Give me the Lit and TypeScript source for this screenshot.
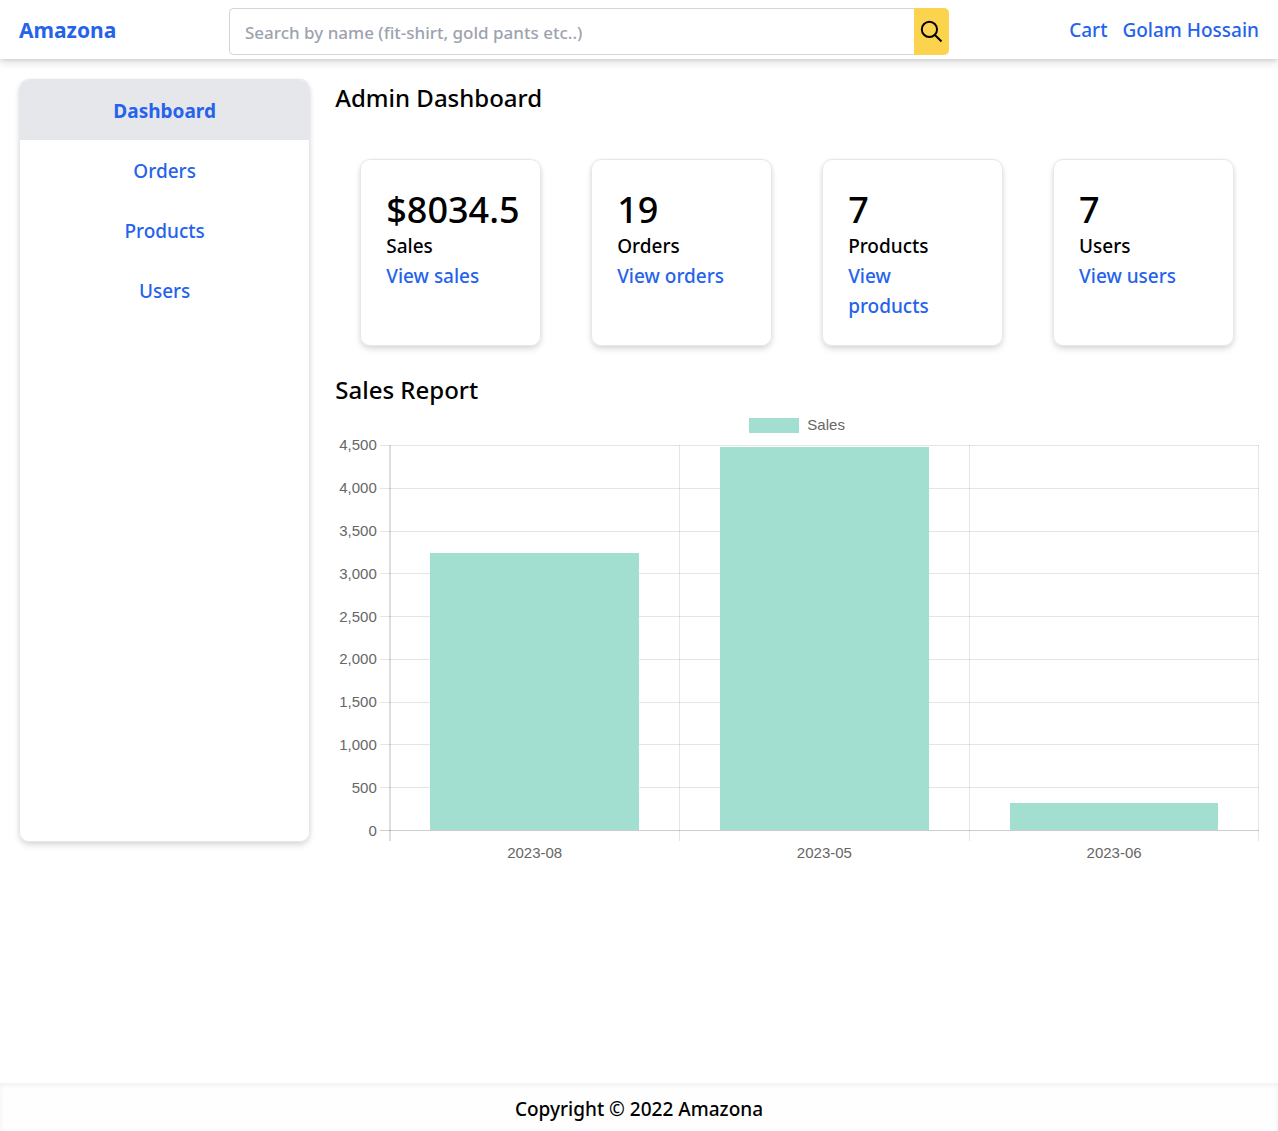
import { LitElement, html, css } from "lit";
import { customElement, property } from "lit/decorators.js";

interface SalesPoint {
  month: string;
  total: number;
}

@customElement("sales-chart")
class SalesChart extends LitElement {
  @property({ attribute: false }) points: SalesPoint[] = [];
  @property({ type: Number }) max = 4500;
  @property({ type: Number }) step = 500;

  static styles = css`
    :host {
      display: block;
      padding: 7px 0 0 4px;
      color: #666;
      font: 15px/18px "Liberation Sans", Arial, sans-serif;
    }
    .legend {
      display: flex;
      justify-content: center;
      align-items: center;
      gap: 8px;
      padding-right: 4px;
      margin-bottom: 11px;
    }
    .swatch {
      width: 50px;
      height: 15px;
      background: #a2dfd0;
    }
    .chart {
      display: grid;
      grid-template-columns: auto 10px minmax(0, 1fr);
      grid-template-rows: auto 10px auto;
    }
    .scale {
      grid-area: 1 / 1;
      display: flex;
      flex-direction: column;
      justify-content: space-between;
      margin-right: 3px;
    }
    .tick {
      display: flex;
      align-items: center;
      justify-content: flex-end;
      height: 0;
    }
    .rows {
      grid-area: 1 / 2 / 2 / 4;
      display: flex;
      flex-direction: column;
    }
    .row {
      flex: 1;
      border-top: 1px solid #e5e5e5;
    }
    .row:last-child {
      border-bottom: 1px solid #ccc;
    }
    .columns {
      grid-area: 1 / 3 / 3 / 4;
      display: flex;
      border-left: 2px solid rgba(0, 0, 0, 0.13);
      margin-left: -1px;
    }
    .column {
      flex: 1;
      border-right: 1px solid rgba(0, 0, 0, 0.1);
    }
    .bars {
      grid-area: 1 / 3;
      display: flex;
      aspect-ratio: 869 / 386;
    }
    .slot {
      flex: 1;
      display: flex;
      align-items: flex-end;
      justify-content: center;
      padding-bottom: 1px;
    }
    .bar {
      width: 72%;
      background: #a2dfd0;
    }
    .months {
      grid-area: 3 / 3;
      display: flex;
      margin-top: 3px;
    }
    .month {
      flex: 1;
      text-align: center;
    }
  `;

  render() {
    const ticks: number[] = [];
    for (let v = this.max; v >= 0; v -= this.step) ticks.push(v);
    return html`
      <div class="legend"><span class="swatch"></span><span>Sales</span></div>
      <div class="chart">
        <div class="scale">
          ${ticks.map((v) => html`<div class="tick">${v.toLocaleString("en-US")}</div>`)}
        </div>
        <div class="rows">${ticks.slice(1).map(() => html`<div class="row"></div>`)}</div>
        <div class="columns">${this.points.map(() => html`<div class="column"></div>`)}</div>
        <div class="bars">
          ${this.points.map(
            (p) => html`<div class="slot">
              <div class="bar" style="height:${(p.total / this.max) * 100}%"></div>
            </div>`
          )}
        </div>
        <div class="months">
          ${this.points.map((p) => html`<div class="month">${p.month}</div>`)}
        </div>
      </div>
    `;
  }
}

@customElement("app-root")
class AppRoot extends LitElement {
  private nav = ["Dashboard", "Orders", "Products", "Users"];

  private stats = [
    { value: "$8034.5", label: "Sales" },
    { value: "19", label: "Orders" },
    { value: "7", label: "Products" },
    { value: "7", label: "Users" },
  ];

  private sales: SalesPoint[] = [
    { month: "2023-08", total: 3237 },
    { month: "2023-05", total: 4475.5 },
    { month: "2023-06", total: 322 },
  ];

  static styles = css`
    :host {
      display: flex;
      flex-direction: column;
      min-height: 100vh;
      background: #fff;
      color: #000;
      font: 500 19px/30px "Noto Sans", "Open Sans", sans-serif;
    }
    * {
      box-sizing: border-box;
    }
    a {
      color: #2563eb;
      text-decoration: none;
    }
    h1,
    h2,
    p,
    ul {
      margin: 0;
      padding: 0;
    }
    h1,
    h2 {
      font-size: 24px;
      line-height: 38px;
      font-weight: 500;
    }
    .header {
      display: flex;
      align-items: flex-start;
      padding: 8px 19px 4px;
      line-height: 45px;
      box-shadow: 0 1px 4px rgba(0, 0, 0, 0.12), 0 5px 8px rgba(0, 0, 0, 0.1);
    }
    .brand {
      width: 210px;
      font-size: 21px;
      font-weight: 700;
    }
    .search {
      flex: 1;
      display: flex;
      height: 47px;
    }
    .field {
      flex: 1;
      min-width: 0;
      padding: 2px 15px 0;
      border: 1px solid #d1d5db;
      border-right: 0;
      border-radius: 5px 0 0 5px;
      background: #fff;
      color: #000;
      font: inherit;
      font-size: 17px;
      outline: none;
    }
    .field::placeholder {
      color: #9ca3af;
      opacity: 1;
    }
    .go {
      display: flex;
      align-items: center;
      justify-content: center;
      width: 35px;
      padding: 0;
      border: 0;
      border-radius: 0 5px 5px 0;
      background: #fcd34d;
      color: #000;
      cursor: pointer;
    }
    .account {
      width: 310px;
      display: flex;
      justify-content: flex-end;
      gap: 15px;
    }
    .content {
      flex: 1;
      display: grid;
      grid-template-columns: repeat(4, minmax(0, 1fr));
      gap: 25px;
      align-content: start;
      padding: 20px 19px;
    }
    .sidebar {
      margin-bottom: 20px;
      border: 1px solid #e5e7eb;
      border-radius: 10px;
      overflow: hidden;
      list-style: none;
      box-shadow: 0 1px 4px rgba(0, 0, 0, 0.07), 0 4px 6px rgba(0, 0, 0, 0.1);
    }
    .entry {
      display: block;
      padding: 16px 15px 14px;
      text-align: center;
    }
    .current {
      background: #e5e7eb;
      font-weight: 700;
    }
    .main {
      grid-column: span 3;
    }
    .stats {
      display: grid;
      grid-template-columns: repeat(4, minmax(0, 1fr));
      gap: 50px;
      padding: 42px 25px 25px;
    }
    .card {
      padding: 29px 28px 24px 25px;
      border: 1px solid #e5e7eb;
      border-radius: 10px;
      box-shadow: 0 1px 4px rgba(0, 0, 0, 0.07), 0 4px 6px rgba(0, 0, 0, 0.1);
    }
    .value {
      font-size: 36px;
      line-height: 42px;
      white-space: nowrap;
    }
    .footer {
      padding: 11px 0 7px;
      text-align: center;
      background: #fefefe;
      box-shadow: inset 0 2px 5px rgba(0, 0, 0, 0.06);
    }
  `;

  render() {
    return html`
      <header class="header">
        <a class="brand" href="#">Amazona</a>
        <form class="search" @submit=${(e: Event) => e.preventDefault()}>
          <input
            class="field"
            type="text"
            aria-label="Search"
            placeholder="Search by name (fit-shirt, gold pants etc..)"
          />
          <button class="go" type="submit" aria-label="Search">
            <svg width="25" height="25" viewBox="0 0 24 24" fill="none" stroke="currentColor" stroke-width="1.9">
              <circle cx="10" cy="10" r="7.3"></circle>
              <path d="M15.3 15.3 21.6 21.6"></path>
            </svg>
          </button>
        </form>
        <nav class="account"><a href="#">Cart</a><a href="#">Golam Hossain</a></nav>
      </header>
      <div class="content">
        <ul class="sidebar">
          ${this.nav.map(
            (name, i) => html`<li>
              <a class="entry ${i === 0 ? "current" : ""}" href="#">${name}</a>
            </li>`
          )}
        </ul>
        <main class="main">
          <h1>Admin Dashboard</h1>
          <div class="stats">
            ${this.stats.map(
              (s) => html`<section class="card">
                <p class="value">${s.value}</p>
                <p>${s.label}</p>
                <a href="#">View ${s.label.toLowerCase()}</a>
              </section>`
            )}
          </div>
          <h2>Sales Report</h2>
          <sales-chart .points=${this.sales}></sales-chart>
        </main>
      </div>
      <footer class="footer">Copyright © 2022 Amazona</footer>
    `;
  }
}
